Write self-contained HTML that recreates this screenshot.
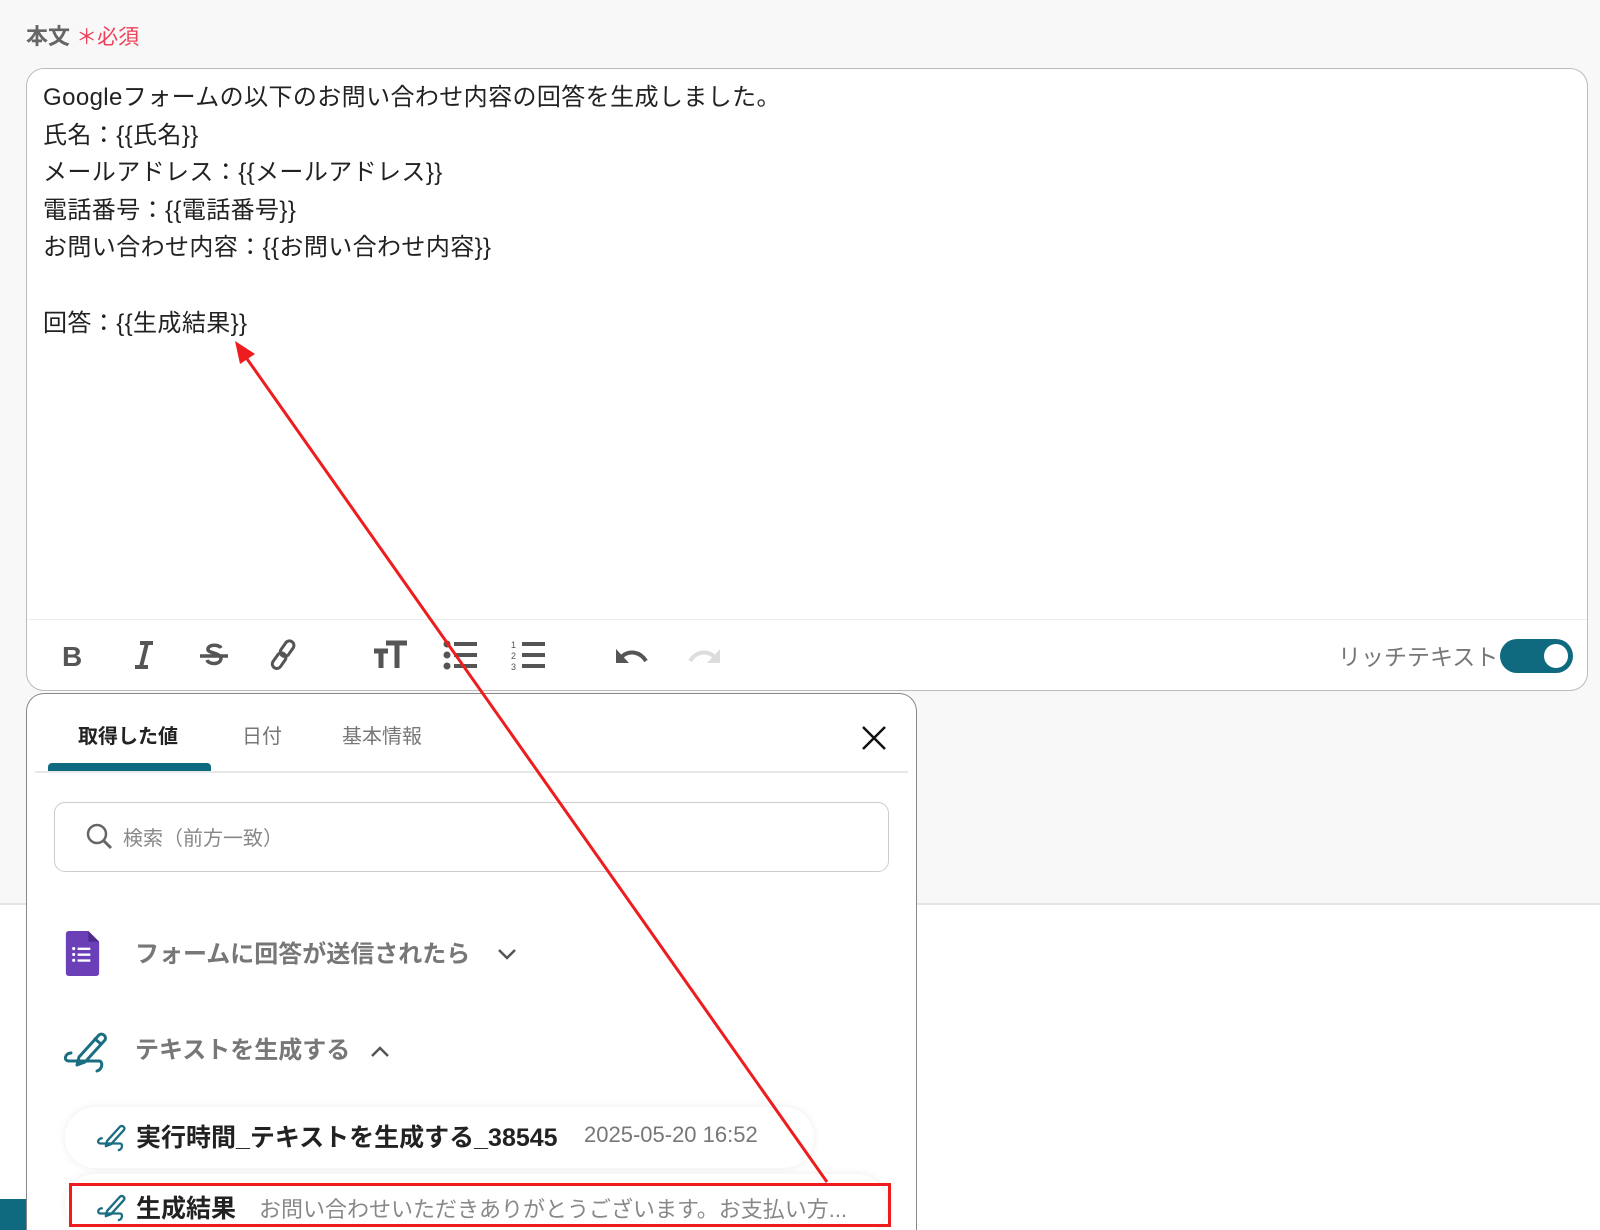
<!DOCTYPE html>
<html><head><meta charset="utf-8">
<style>
*{box-sizing:border-box;margin:0;padding:0}
html,body{overflow:hidden}
body{width:1600px;height:1230px;overflow:hidden;position:relative;background:#fff;font-family:"Liberation Sans","Noto Sans CJK JP",sans-serif}
.top{position:absolute;left:0;top:0;width:1600px;height:905px;background:#f8f8f8;border-bottom:2px solid #e4e4e4}
.lbl{position:absolute;left:26px;top:19px;font-size:22px;color:#666;font-weight:bold}
.lbl span{color:#f0405a;font-weight:normal;font-size:21px}
.ed{position:absolute;left:26px;top:68px;width:1562px;height:623px;background:#fff;border:1.5px solid #bbb;border-radius:18px}
.txt{position:absolute;left:16px;top:10px;font-size:24px;line-height:37.6px;color:#222;letter-spacing:0.4px}
.sep{position:absolute;left:0;right:0;top:550px;border-top:1px solid #eee}
.ic{position:absolute}
.rt{position:absolute;left:1338px;top:638px;font-size:23px;color:#777}
.tg{position:absolute;left:1500px;top:639px;width:73px;height:34px;border-radius:17px;background:#0f6a80}
.tg:after{content:"";position:absolute;right:5px;top:5px;width:24px;height:24px;border-radius:50%;background:#fff}
.pop{position:absolute;left:26px;top:693px;width:891px;height:537px;background:#fff;border:1.5px solid #888;border-bottom:none;border-radius:18px 18px 0 0}
.tab{position:absolute;top:26px;font-size:20px;color:#777}
.ul{position:absolute;left:21px;top:69px;width:163px;height:8px;background:#0f6a80;border-radius:4px 4px 0 0}
.hl{position:absolute;left:8px;right:8px;top:77px;border-top:2px solid #e8e8e8}
.srch{position:absolute;left:27px;top:108px;width:835px;height:70px;border:1.5px solid #ccc;border-radius:11px}
.srch span{position:absolute;left:68px;top:19px;font-size:20px;color:#888}
.grp{position:absolute;font-size:24px;color:#777;font-weight:bold}
.pill{position:absolute;left:38px;width:749px;height:61px;border-radius:30px;background:#fff;box-shadow:0 0 8px rgba(0,0,0,.08)}
</style></head><body>
<div class="top"></div>
<div class="lbl">本文 <span>＊必須</span></div>
<div class="ed">
<div class="txt">Googleフォームの以下のお問い合わせ内容の回答を生成しました。<br>氏名：{{氏名}}<br>メールアドレス：{{メールアドレス}}<br>電話番号：{{電話番号}}<br>お問い合わせ内容：{{お問い合わせ内容}}<br><br>回答：{{生成結果}}</div>
<div class="sep"></div>
</div>
<svg class="ic" style="left:62px;top:640px" width="24" height="30" viewBox="0 0 24 30"><text x="0" y="26" font-size="28" font-weight="bold" fill="#555" font-family="Liberation Sans">B</text></svg>
<svg class="ic" style="left:132px;top:640px" width="24" height="30" viewBox="0 0 24 30"><path d="M8 3h13M3 27h13M15 3L9 27" stroke="#555" stroke-width="4" fill="none"/></svg>
<svg class="ic" style="left:198px;top:640px" width="32" height="30" viewBox="0 0 32 30"><path d="M23 8c-2-4-14-4-13 2c1 3 12 3 13 8c0 7-12 7-14 2M2 16h28" stroke="#555" stroke-width="3.5" fill="none"/></svg>
<svg class="ic" style="left:268px;top:638px" width="32" height="34" viewBox="0 0 32 34"><g stroke="#555" stroke-width="3" fill="none"><rect x="15" y="2" width="9" height="17" rx="4.5" transform="rotate(35 19 10)"/><rect x="7" y="14" width="9" height="17" rx="4.5" transform="rotate(35 11 22)"/></g></svg>
<svg class="ic" style="left:372px;top:640px" width="36" height="30" viewBox="0 0 36 30"><path d="M2 11h14M9 11v17M14 3h21M25 3v25" stroke="#555" stroke-width="5" fill="none"/></svg>
<svg class="ic" style="left:442px;top:640px" width="36" height="30" viewBox="0 0 36 30"><g fill="#555"><circle cx="5" cy="4" r="3.5"/><circle cx="5" cy="15" r="3.5"/><circle cx="5" cy="26" r="3.5"/><rect x="12" y="2" width="23" height="4"/><rect x="12" y="13" width="23" height="4"/><rect x="12" y="24" width="23" height="4"/></g></svg>
<svg class="ic" style="left:510px;top:640px" width="36" height="30" viewBox="0 0 36 30"><g fill="#555"><text x="1" y="8" font-size="9" font-family="Liberation Sans">1</text><text x="1" y="19" font-size="9" font-family="Liberation Sans">2</text><text x="1" y="30" font-size="9" font-family="Liberation Sans">3</text><rect x="12" y="2" width="23" height="4"/><rect x="12" y="13" width="23" height="4"/><rect x="12" y="24" width="23" height="4"/></g></svg>
<svg class="ic" style="left:614px;top:643px" width="38" height="26" viewBox="0 0 38 26"><path d="M6 16c6-9 19-9 26 2" stroke="#555" stroke-width="4" fill="none"/><path d="M2 6v14h13z" fill="#555"/></svg>
<svg class="ic" style="left:684px;top:643px" width="38" height="26" viewBox="0 0 38 26"><path d="M32 16c-6-9-19-9-26 2" stroke="#ddd" stroke-width="4" fill="none"/><path d="M36 6v14h-13z" fill="#ddd"/></svg>
<div class="rt">リッチテキスト</div>
<div class="tg"></div>
<div style="position:absolute;left:0;top:1199px;width:26px;height:31px;background:#0f6a80"></div>
<div class="pop">
<div class="tab" style="left:51px;color:#222;font-weight:bold">取得した値</div>
<div class="tab" style="left:215px">日付</div>
<div class="tab" style="left:315px">基本情報</div>
<svg style="position:absolute;left:833px;top:30px" width="28" height="28" viewBox="0 0 28 28"><path d="M3 3l22 22M25 3L3 25" stroke="#111" stroke-width="2.5"/></svg>
<div class="ul"></div><div class="hl"></div>
<div class="srch"><svg style="position:absolute;left:30px;top:19px" width="30" height="30" viewBox="0 0 30 30"><circle cx="12" cy="12" r="9" stroke="#666" stroke-width="2.5" fill="none"/><path d="M19 19l7 7" stroke="#666" stroke-width="3"/></svg><span>検索（前方一致）</span></div>
<svg style="position:absolute;left:38px;top:237px" width="35" height="45" viewBox="0 0 34 46"><path d="M3 0h20l11 11v32a3 3 0 0 1-3 3H3a3 3 0 0 1-3-3V3a3 3 0 0 1 3-3z" fill="#6b3fb8"/><path d="M23 0l11 11H23z" fill="#4d2a8c"/><g fill="#fff"><circle cx="8" cy="18" r="1.6"/><circle cx="8" cy="24" r="1.6"/><circle cx="8" cy="30" r="1.6"/><rect x="12" y="17" width="13" height="2.4"/><rect x="12" y="23" width="13" height="2.4"/><rect x="12" y="29" width="13" height="2.4"/></g></svg>
<div class="grp" style="left:108px;top:240px">フォームに回答が送信されたら</div>
<svg style="position:absolute;left:469px;top:252px" width="22" height="16" viewBox="0 0 22 16"><path d="M3 4l8 8 8-8" stroke="#555" stroke-width="2.5" fill="none"/></svg>
<svg style="position:absolute;left:32px;top:331px" width="52" height="52" viewBox="0 0 52 52"><g stroke="#1a6e82" stroke-width="3" fill="none" stroke-linecap="round" stroke-linejoin="round"><path d="M20 32l20-22a4 4 0 0 1 6 5L26 37l-8 3z"/><path d="M36 14l6 5"/><path d="M12 28c-6 0-8 8-2 8c6 0 30 0 30 0c4 0 4 8-2 10"/></g></svg>
<div class="grp" style="left:108px;top:336px">テキストを生成する</div>
<svg style="position:absolute;left:342px;top:350px" width="22" height="16" viewBox="0 0 22 16"><path d="M3 12l8-8 8 8" stroke="#555" stroke-width="2.5" fill="none"/></svg>
<div class="pill" style="top:413px"></div>
<svg style="position:absolute;left:67px;top:426px" width="34" height="34" viewBox="0 0 52 52"><g stroke="#1a6e82" stroke-width="3.5" fill="none" stroke-linecap="round" stroke-linejoin="round"><path d="M20 32l20-22a4 4 0 0 1 6 5L26 37l-8 3z"/><path d="M12 28c-6 0-8 8-2 8c6 0 30 0 30 0c4 0 4 8-2 10"/></g></svg>
<div style="position:absolute;left:109px;top:424px;font-size:25px;font-weight:bold;color:#222">実行時間_テキストを生成する_38545</div>
<div style="position:absolute;left:557px;top:428px;font-size:22px;color:#777">2025-05-20 16:52</div>
<div class="pill" style="top:480px;width:822px"></div>
<svg style="position:absolute;left:67px;top:496px" width="34" height="34" viewBox="0 0 52 52"><g stroke="#1a6e82" stroke-width="3.5" fill="none" stroke-linecap="round" stroke-linejoin="round"><path d="M20 32l20-22a4 4 0 0 1 6 5L26 37l-8 3z"/><path d="M12 28c-6 0-8 8-2 8c6 0 30 0 30 0c4 0 4 8-2 10"/></g></svg>
<div style="position:absolute;left:109px;top:495px;font-size:25px;font-weight:bold;color:#222">生成結果</div>
<div style="position:absolute;left:232px;top:498px;font-size:22px;color:#888">お問い合わせいただきありがとうございます。お支払い方...</div>
</div>
<div style="position:absolute;left:69px;top:1183px;width:822px;height:44px;border:3px solid #ee1c1c"></div>
<svg style="position:absolute;left:0;top:0" width="1600" height="1230"><line x1="827" y1="1182" x2="245" y2="356" stroke="#ee1c1c" stroke-width="3"/><path d="M235 341l20 13-15 10z" fill="#ee1c1c"/></svg>
</body></html>
